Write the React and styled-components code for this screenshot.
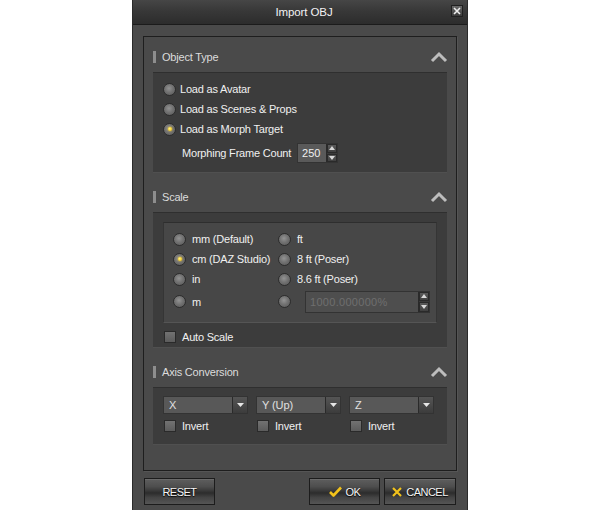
import React from "react";
import styled, { createGlobalStyle } from "styled-components";

const GlobalStyle = createGlobalStyle`
  html, body { margin: 0; padding: 0; background: #ffffff; }
  body { font-family: "Liberation Sans", Arial, sans-serif; }
  * { box-sizing: border-box; }
`;

const Page = styled.div`
  width: 600px;
  height: 510px;
  display: flex;
  justify-content: center;
  overflow: hidden;
`;

const Dialog = styled.div`
  width: 336px;
  height: 510px;
  background: #4a4a4a;
  border-left: 1px solid #2a2a2a;
  border-right: 1px solid #2a2a2a;
  display: flex;
  flex-direction: column;
`;

const TitleBar = styled.div`
  height: 25px;
  flex: none;
  background: linear-gradient(#464646 0%, #383838 45%, #2c2c2c 100%);
  border-bottom: 1px solid #1b1b1b;
  display: grid;
  grid-template-columns: 1fr auto;
  align-items: center;
  padding: 0 4px 0 24px;
`;

const Title = styled.div`
  text-align: center;
  color: #f2f2f2;
  font-size: 11.5px;
  letter-spacing: -0.1px;
`;

const CloseBtn = styled.div`
  width: 12px;
  height: 12px;
  border: 1px solid #202020;
  background: linear-gradient(#6a6a6a, #3a3a3a);
  display: flex;
  align-items: center;
  justify-content: center;
  margin-top: -2px;
`;

const Frame = styled.div`
  margin: 11px 10px 0 10px;
  height: 435px;
  border: 1px solid #1e1e1e;
  box-shadow: 1px 1px 0 #555;
  background: #4a4a4a;
  display: flex;
  flex-direction: column;
`;

const Section = styled.div`
  display: flex;
  flex-direction: column;
  margin-top: ${(p) => (p.$first ? "0" : "4px")};
`;

const Header = styled.div`
  height: 35px;
  padding: 4px 8px 0 9px;
  display: flex;
  align-items: center;
`;

const HeaderBar = styled.span`
  width: 3px;
  height: 12px;
  background: #8e8e8e;
  margin-right: 6px;
`;

const HeaderText = styled.span`
  flex: 1;
  color: #dcdcdc;
  font-size: 11px;
  letter-spacing: -0.2px;
`;

const Panel = styled.div`
  margin: 0 9px;
  background: #3c3c3c;
  border-top: 1px solid #2f2f2f;
  border-bottom: 1px solid #505050;
  height: ${(p) => p.$h}px;
  padding: ${(p) => p.$pad};
  display: flex;
  flex-direction: column;
`;

const Row = styled.div`
  height: ${(p) => p.$h || 20}px;
  display: flex;
  align-items: center;
  margin-top: ${(p) => p.$mt || 0}px;
  padding-left: ${(p) => p.$pl || 0}px;
`;

const RadioDot = styled.span`
  position: relative;
  flex: none;
  width: 13px;
  height: 13px;
  border-radius: 50%;
  border: 1px solid #2c2c2c;
  background: radial-gradient(circle at 45% 40%, #939393 0%, #727272 45%, #555555 100%);
  margin-right: ${(p) => p.$gap || 4}px;
  margin-left: -1px;
  &::after {
    content: "";
    display: ${(p) => (p.$checked ? "block" : "none")};
    position: absolute;
    left: 3.5px;
    top: 3.5px;
    width: 4px;
    height: 4px;
    border-radius: 50%;
    background: radial-gradient(circle at 40% 40%, #fff27a, #f0b800);
    box-shadow: 0 0 2px #ffcc00;
  }
`;

const Label = styled.span`
  color: #f0f0f0;
  font-size: 11px;
  letter-spacing: -0.2px;
  white-space: nowrap;
`;

const Radio = ({ checked, children, gap }) => (
  <>
    <RadioDot $checked={checked} $gap={gap} />
    {children != null && <Label>{children}</Label>}
  </>
);

const CheckBox = styled.span`
  flex: none;
  width: 12px;
  height: 12px;
  border: 1px solid #2a2a2a;
  background: linear-gradient(#727272, #5c5c5c);
  margin-right: 6px;
`;

const Spin = styled.div`
  display: flex;
  height: ${(p) => p.$h}px;
  width: ${(p) => p.$w}px;
  margin-left: ${(p) => p.$ml || 0}px;
  border: 1px solid #333;
`;

const SpinField = styled.div`
  flex: 1;
  background: ${(p) => (p.$disabled ? "#4e4e4e" : "#5a5a5a")};
  color: ${(p) => (p.$disabled ? "#6e6e6e" : "#f0f0f0")};
  font-size: 11px;
  display: flex;
  align-items: center;
  padding-left: 4px;
  letter-spacing: ${(p) => (p.$disabled ? "0.3px" : "0")};
`;

const SpinBtns = styled.div`
  width: 11px;
  display: flex;
  flex-direction: column;
  background: #3a3a3a;
  border-left: 1px solid #2a2a2a;
`;

const SpinBtn = styled.div`
  flex: 1;
  display: flex;
  align-items: center;
  justify-content: center;
  background: linear-gradient(#5a5a5a, #404040);
  border: 1px solid #2a2a2a;
  margin: ${(p) => (p.$up ? "0 0 0.5px 0" : "0.5px 0 0 0")};
`;

const Tri = ({ up }) => (
  <svg width="6" height="4" viewBox="0 0 6 4">
    {up ? <path d="M0 4 L3 0 L6 4 Z" fill="#d8d8d8" /> : <path d="M0 0 L6 0 L3 4 Z" fill="#d8d8d8" />}
  </svg>
);

const SpinBox = ({ value, w, h, ml, disabled }) => (
  <Spin $w={w} $h={h} $ml={ml}>
    <SpinField $disabled={disabled}>{value}</SpinField>
    <SpinBtns>
      <SpinBtn $up>
        <Tri up />
      </SpinBtn>
      <SpinBtn>
        <Tri />
      </SpinBtn>
    </SpinBtns>
  </Spin>
);

const ScaleBox = styled.div`
  margin: 9px 10px 0 10px;
  height: 101px;
  background: #474747;
  border-top: 1px solid #2e2e2e;
  border-left: 1px solid #353535;
  border-right: 1px solid #353535;
  border-bottom: 1px solid #555;
  padding: 6px 0 0 10px;
  display: grid;
  grid-template-columns: 105px 1fr;
  grid-template-rows: 20px 20px 20px 22px;
  align-items: center;
  & > :nth-child(n + 7) {
    margin-top: 3px;
  }
`;

const Cell = styled.div`
  display: flex;
  align-items: center;
  height: 100%;
`;

const AxisGrid = styled.div`
  display: grid;
  grid-template-columns: repeat(3, 85px);
  column-gap: 8px;
  padding: 8px 0 0 10px;
  row-gap: 4px;
`;

const Select = styled.div`
  height: 18px;
  display: flex;
  border: 1px solid #333;
`;

const SelectField = styled.div`
  flex: 1;
  background: #585858;
  color: #e0e0e0;
  font-size: 11px;
  display: flex;
  align-items: center;
  padding-left: 5px;
  letter-spacing: -0.1px;
`;

const SelectArrow = styled.div`
  width: 15px;
  background: linear-gradient(#555, #3c3c3c);
  border-left: 1px solid #2a2a2a;
  display: flex;
  align-items: center;
  justify-content: center;
`;

const Chevron = () => (
  <svg width="18" height="12" viewBox="0 0 18 12">
    <path d="M2 10 L9 3 L16 10" stroke="#bdbdbd" strokeWidth="3" fill="none" />
  </svg>
);

const Footer = styled.div`
  display: flex;
  align-items: flex-start;
  padding: 7px 11px 0 11px;
  gap: 4px;
`;

const Button = styled.div`
  width: ${(p) => p.$w}px;
  height: 27px;
  margin-right: ${(p) => (p.$push ? "auto" : "0")};
  border: 1px solid #1c1c1c;
  background: linear-gradient(
    #5e5e5e 0%,
    #4e4e4e 30%,
    #3a3a3a 46%,
    #2c2c2c 56%,
    #444444 74%,
    #555555 100%
  );
  box-shadow: inset 0 1px 0 #6a6a6a;
  display: flex;
  align-items: center;
  justify-content: center;
  gap: 4px;
  color: #f4f4f4;
  font-size: 11px;
  letter-spacing: -0.5px;
  text-shadow: 0 1px 1px #000;
`;

const CheckIcon = () => (
  <svg width="13" height="11" viewBox="0 0 13 11">
    <path d="M1 6 L4.5 9.5 L12 1.5" stroke="#f2c21b" strokeWidth="2.6" fill="none" strokeLinejoin="round" />
  </svg>
);

const XIcon = () => (
  <svg width="10" height="10" viewBox="0 0 10 10">
    <path d="M1 1 L9 9 M9 1 L1 9" stroke="#f2c21b" strokeWidth="2.2" fill="none" />
  </svg>
);

export default function App() {
  return (
    <>
      <GlobalStyle />
      <Page>
        <Dialog>
          <TitleBar>
            <Title>Import OBJ</Title>
            <CloseBtn>
              <svg width="8" height="8" viewBox="0 0 8 8">
                <path d="M1 1 L7 7 M7 1 L1 7" stroke="#eee" strokeWidth="1.6" />
              </svg>
            </CloseBtn>
          </TitleBar>
          <Frame>
            <Section $first>
              <Header>
                <HeaderBar />
                <HeaderText>Object Type</HeaderText>
                <Chevron />
              </Header>
              <Panel $h={101} $pad="6px 0 0 11px">
                <Row>
                  <Radio>Load as Avatar</Radio>
                </Row>
                <Row>
                  <Radio>Load as Scenes &amp; Props</Radio>
                </Row>
                <Row>
                  <Radio checked>Load as Morph Target</Radio>
                </Row>
                <Row $mt={4} $pl={18}>
                  <Label>Morphing Frame Count</Label>
                  <SpinBox value="250" w={41} h={20} ml={6} />
                </Row>
              </Panel>
            </Section>
            <Section>
              <Header>
                <HeaderBar />
                <HeaderText>Scale</HeaderText>
                <Chevron />
              </Header>
              <Panel $h={136} $pad="0">
                <ScaleBox>
                  <Cell>
                    <Radio gap={6}>mm (Default)</Radio>
                  </Cell>
                  <Cell>
                    <Radio gap={6}>ft</Radio>
                  </Cell>
                  <Cell>
                    <Radio gap={6} checked>
                      cm (DAZ Studio)
                    </Radio>
                  </Cell>
                  <Cell>
                    <Radio gap={6}>8 ft (Poser)</Radio>
                  </Cell>
                  <Cell>
                    <Radio gap={6}>in</Radio>
                  </Cell>
                  <Cell>
                    <Radio gap={6}>8.6 ft (Poser)</Radio>
                  </Cell>
                  <Cell>
                    <Radio gap={6}>m</Radio>
                  </Cell>
                  <Cell>
                    <Radio gap={0} />
                    <SpinBox value="1000.000000%" w={125} h={22} ml={10} disabled />
                  </Cell>
                </ScaleBox>
                <Row $mt={4} $pl={11}>
                  <CheckBox />
                  <Label>Auto Scale</Label>
                </Row>
              </Panel>
            </Section>
            <Section>
              <Header>
                <HeaderBar />
                <HeaderText>Axis Conversion</HeaderText>
                <Chevron />
              </Header>
              <Panel $h={58} $pad="0">
                <AxisGrid>
                  {["X", "Y (Up)", "Z"].map((v) => (
                    <Select key={v}>
                      <SelectField>{v}</SelectField>
                      <SelectArrow>
                        <svg width="7" height="4" viewBox="0 0 7 4">
                          <path d="M0 0 L7 0 L3.5 4 Z" fill="#e6e6e6" />
                        </svg>
                      </SelectArrow>
                    </Select>
                  ))}
                  {["x", "y", "z"].map((k) => (
                    <Row key={k} $h={16} $pl={1}>
                      <CheckBox />
                      <Label>Invert</Label>
                    </Row>
                  ))}
                </AxisGrid>
              </Panel>
            </Section>
          </Frame>
          <Footer>
            <Button $w={71} $push>
              RESET
            </Button>
            <Button $w={71}>
              <CheckIcon />
              OK
            </Button>
            <Button $w={72}>
              <XIcon />
              CANCEL
            </Button>
          </Footer>
        </Dialog>
      </Page>
    </>
  );
}
